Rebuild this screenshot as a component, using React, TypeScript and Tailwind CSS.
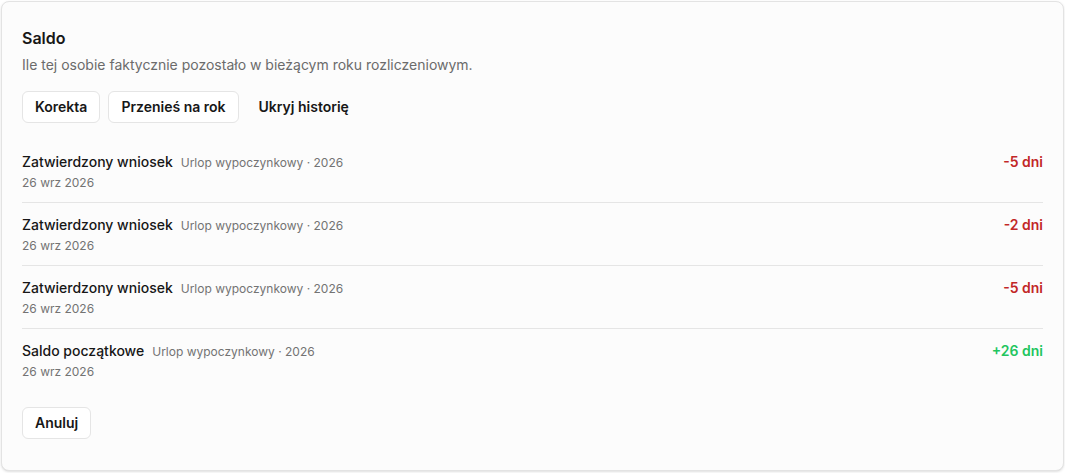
import React from 'react';

interface HistoryEntry {
  title: string;
  meta: string;
  date: string;
  amount: string;
  positive: boolean;
}

const entries: HistoryEntry[] = [
  { title: 'Zatwierdzony wniosek', meta: 'Urlop wypoczynkowy · 2026', date: '26 wrz 2026', amount: '-5 dni', positive: false },
  { title: 'Zatwierdzony wniosek', meta: 'Urlop wypoczynkowy · 2026', date: '26 wrz 2026', amount: '-2 dni', positive: false },
  { title: 'Zatwierdzony wniosek', meta: 'Urlop wypoczynkowy · 2026', date: '26 wrz 2026', amount: '-5 dni', positive: false },
  { title: 'Saldo początkowe', meta: 'Urlop wypoczynkowy · 2026', date: '26 wrz 2026', amount: '+26 dni', positive: true },
];

export default function App() {
  return (
    <div className="min-h-screen bg-white p-px font-['Inter',sans-serif] text-[#171717]">
      <div className="rounded-lg border border-[#e3e3e3] bg-[#fcfcfc] px-5 pt-6 pb-[31px] shadow-sm">
        <h2 className="text-base leading-6 font-semibold">Saldo</h2>
        <p className="mt-[5px] text-sm leading-5 text-[#6b6b6b]">
          Ile tej osobie faktycznie pozostało w bieżącym roku rozliczeniowym.
        </p>

        <div className="mt-[16px] flex gap-2">
          <button className="h-8 rounded-md border border-[#e5e5e5] bg-white px-3 text-sm font-semibold">
            Korekta
          </button>
          <button className="h-8 rounded-md border border-[#e5e5e5] bg-white px-3 text-sm font-semibold">
            Przenieś na rok
          </button>
          <button className="h-8 rounded-md px-3 text-sm font-semibold">Ukryj historię</button>
        </div>

        <ul className="mt-[17px]">
          {entries.map((entry, i) => (
            <li
              key={i}
              className={`flex items-start justify-between pt-[12px] pb-[10px] ${
                i < entries.length - 1 ? 'border-b border-[#e5e5e5]' : ''
              }`}
            >
              <div>
                <div className="flex items-baseline gap-2">
                  <span className="text-sm leading-5 font-medium">{entry.title}</span>
                  <span className="text-xs leading-5 text-[#737373]">{entry.meta}</span>
                </div>
                <div className="text-xs leading-[19px] text-[#737373]">{entry.date}</div>
              </div>
              <span
                className={`text-sm leading-5 font-semibold ${
                  entry.positive ? 'text-[#22c55e]' : 'text-[#c22727]'
                }`}
              >
                {entry.amount}
              </span>
            </li>
          ))}
        </ul>

        <button className="mt-4 h-8 rounded-md border border-[#e5e5e5] bg-white px-3 text-sm font-semibold">
          Anuluj
        </button>
      </div>
    </div>
  );
}
